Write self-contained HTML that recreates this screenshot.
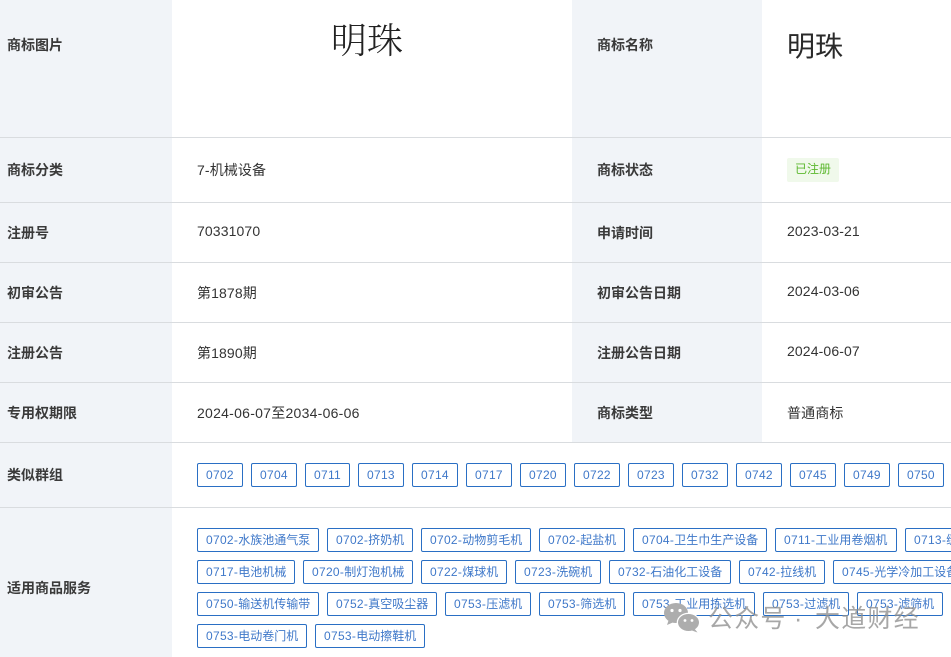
<!DOCTYPE html>
<html lang="zh">
<head>
<meta charset="utf-8">
<title>商标详情</title>
<style>
html,body{margin:0;padding:0;background:#fff}
body{width:951px;height:657px;position:relative;overflow:hidden;font-family:"Liberation Sans","Noto Sans CJK SC",sans-serif;font-size:14px;color:#333}
.bg{position:absolute;background:#f1f4f8}
.ln{position:absolute;left:0;width:951px;height:1px;background:#d9dcdf}
.l,.v{position:absolute;line-height:20px;white-space:nowrap}
.l{font-weight:700;color:#3a3a3a}
.v{letter-spacing:.12px}
.t{position:absolute;box-sizing:border-box;height:24px;border:1px solid #2a6fc4;border-radius:2px;color:#3f78c9;font-size:12px;line-height:22px;padding-left:8px;white-space:nowrap;overflow:hidden;background:#fff}
.t i{font-style:normal;letter-spacing:.3px}
.w{position:absolute;top:604px;font-size:25px;line-height:30px;color:#8f8f8f;opacity:.78;white-space:nowrap;letter-spacing:1.2px}
</style>
</head>
<body>
<div class="bg" style="left:0;top:0;width:172px;height:657px"></div>
<div class="bg" style="left:572px;top:0;width:190px;height:443px"></div>
<div class="ln" style="top:137px"></div>
<div class="ln" style="top:202px"></div>
<div class="ln" style="top:262px"></div>
<div class="ln" style="top:322px"></div>
<div class="ln" style="top:382px"></div>
<div class="ln" style="top:442px"></div>
<div class="ln" style="top:507px"></div>

<div class="l" style="left:7px;top:35px">商标图片</div>
<div class="l" style="left:7px;top:160px">商标分类</div>
<div class="l" style="left:7px;top:223px">注册号</div>
<div class="l" style="left:7px;top:283px">初审公告</div>
<div class="l" style="left:7px;top:343px">注册公告</div>
<div class="l" style="left:7px;top:403px">专用权期限</div>
<div class="l" style="left:7px;top:465px">类似群组</div>
<div class="l" style="left:7px;top:578px">适用商品服务</div>

<div class="l" style="left:597px;top:35px">商标名称</div>
<div class="l" style="left:597px;top:160px">商标状态</div>
<div class="l" style="left:597px;top:223px">申请时间</div>
<div class="l" style="left:597px;top:283px">初审公告日期</div>
<div class="l" style="left:597px;top:343px">注册公告日期</div>
<div class="l" style="left:597px;top:403px">商标类型</div>

<div style="position:absolute;left:331px;top:16px;font:300 36px/46px 'Noto Serif CJK SC',serif;color:#222;white-space:nowrap">明珠</div>
<div style="position:absolute;left:787px;top:27px;font-size:28px;line-height:40px;color:#2a2a2a;white-space:nowrap">明珠</div>

<div class="v" style="left:197px;top:160px">7-机械设备</div>
<div class="v" style="left:197px;top:221px">70331070</div>
<div class="v" style="left:197px;top:283px">第1878期</div>
<div class="v" style="left:197px;top:343px">第1890期</div>
<div class="v" style="left:197px;top:403px;letter-spacing:.26px">2024-06-07至2034-06-06</div>

<div style="position:absolute;left:787px;top:158px;width:52px;height:24px;box-sizing:border-box;background:#f0f9eb;border-radius:2px;color:#5cb82f;font-size:12px;line-height:23px;text-align:center">已注册</div>
<div class="v" style="left:787px;top:221px">2023-03-21</div>
<div class="v" style="left:787px;top:281px">2024-03-06</div>
<div class="v" style="left:787px;top:341px">2024-06-07</div>
<div class="v" style="left:787px;top:403px">普通商标</div>

<!-- 类似群组 -->
<div class="t" style="left:197px;top:463px;width:46px"><i>0702</i></div>
<div class="t" style="left:251px;top:463px;width:46px"><i>0704</i></div>
<div class="t" style="left:305px;top:463px;width:45px"><i>0711</i></div>
<div class="t" style="left:358px;top:463px;width:46px"><i>0713</i></div>
<div class="t" style="left:412px;top:463px;width:46px"><i>0714</i></div>
<div class="t" style="left:466px;top:463px;width:46px"><i>0717</i></div>
<div class="t" style="left:520px;top:463px;width:46px"><i>0720</i></div>
<div class="t" style="left:574px;top:463px;width:46px"><i>0722</i></div>
<div class="t" style="left:628px;top:463px;width:46px"><i>0723</i></div>
<div class="t" style="left:682px;top:463px;width:46px"><i>0732</i></div>
<div class="t" style="left:736px;top:463px;width:46px"><i>0742</i></div>
<div class="t" style="left:790px;top:463px;width:46px"><i>0745</i></div>
<div class="t" style="left:844px;top:463px;width:46px"><i>0749</i></div>
<div class="t" style="left:898px;top:463px;width:46px"><i>0750</i></div>

<!-- 适用商品服务 -->
<div class="t" style="left:197px;top:528px;width:122px"><i>0702-</i>水族池通气泵</div>
<div class="t" style="left:327px;top:528px;width:86px"><i>0702-</i>挤奶机</div>
<div class="t" style="left:421px;top:528px;width:110px"><i>0702-</i>动物剪毛机</div>
<div class="t" style="left:539px;top:528px;width:86px"><i>0702-</i>起盐机</div>
<div class="t" style="left:633px;top:528px;width:134px"><i>0704-</i>卫生巾生产设备</div>
<div class="t" style="left:775px;top:528px;width:122px"><i>0711-</i>工业用卷烟机</div>
<div class="t" style="left:905px;top:528px;width:80px"><i>0713-</i>缝纫机</div>

<div class="t" style="left:197px;top:560px;width:98px"><i>0717-</i>电池机械</div>
<div class="t" style="left:303px;top:560px;width:110px"><i>0720-</i>制灯泡机械</div>
<div class="t" style="left:421px;top:560px;width:86px"><i>0722-</i>煤球机</div>
<div class="t" style="left:515px;top:560px;width:86px"><i>0723-</i>洗碗机</div>
<div class="t" style="left:609px;top:560px;width:122px"><i>0732-</i>石油化工设备</div>
<div class="t" style="left:739px;top:560px;width:86px"><i>0742-</i>拉线机</div>
<div class="t" style="left:833px;top:560px;width:150px"><i>0745-</i>光学冷加工设备</div>

<div class="t" style="left:197px;top:592px;width:122px"><i>0750-</i>输送机传输带</div>
<div class="t" style="left:327px;top:592px;width:110px"><i>0752-</i>真空吸尘器</div>
<div class="t" style="left:445px;top:592px;width:86px"><i>0753-</i>压滤机</div>
<div class="t" style="left:539px;top:592px;width:86px"><i>0753-</i>筛选机</div>
<div class="t" style="left:633px;top:592px;width:122px"><i>0753-</i>工业用拣选机</div>
<div class="t" style="left:763px;top:592px;width:86px"><i>0753-</i>过滤机</div>
<div class="t" style="left:857px;top:592px;width:86px"><i>0753-</i>滤筛机</div>

<div class="t" style="left:197px;top:624px;width:110px"><i>0753-</i>电动卷门机</div>
<div class="t" style="left:315px;top:624px;width:110px"><i>0753-</i>电动擦鞋机</div>

<!-- 水印 -->
<svg style="position:absolute;left:664px;top:603px" width="36" height="30" viewBox="0 0 36 30">
  <ellipse cx="12" cy="10" rx="12" ry="10" fill="#adadad"/>
  <path d="M5 16l-2 6 7-3z" fill="#adadad"/>
  <ellipse cx="24.5" cy="19.5" rx="11.8" ry="9.8" fill="#fff"/>
  <ellipse cx="24.5" cy="19.5" rx="10.5" ry="8.5" fill="#adadad"/>
  <path d="M30 25l3.500 4.500-7-2.500z" fill="#adadad"/>
  <circle cx="8" cy="7.500" r="1.600" fill="#fff"/>
  <circle cx="16" cy="7.500" r="1.600" fill="#fff"/>
  <circle cx="21" cy="17.500" r="1.400" fill="#fff"/>
  <circle cx="28" cy="17.500" r="1.400" fill="#fff"/>
</svg>
<div class="w" style="left:708px">公众号</div>
<div class="w" style="left:794px">·</div>
<div class="w" style="left:815px">大道财经</div>
</body>
</html>
